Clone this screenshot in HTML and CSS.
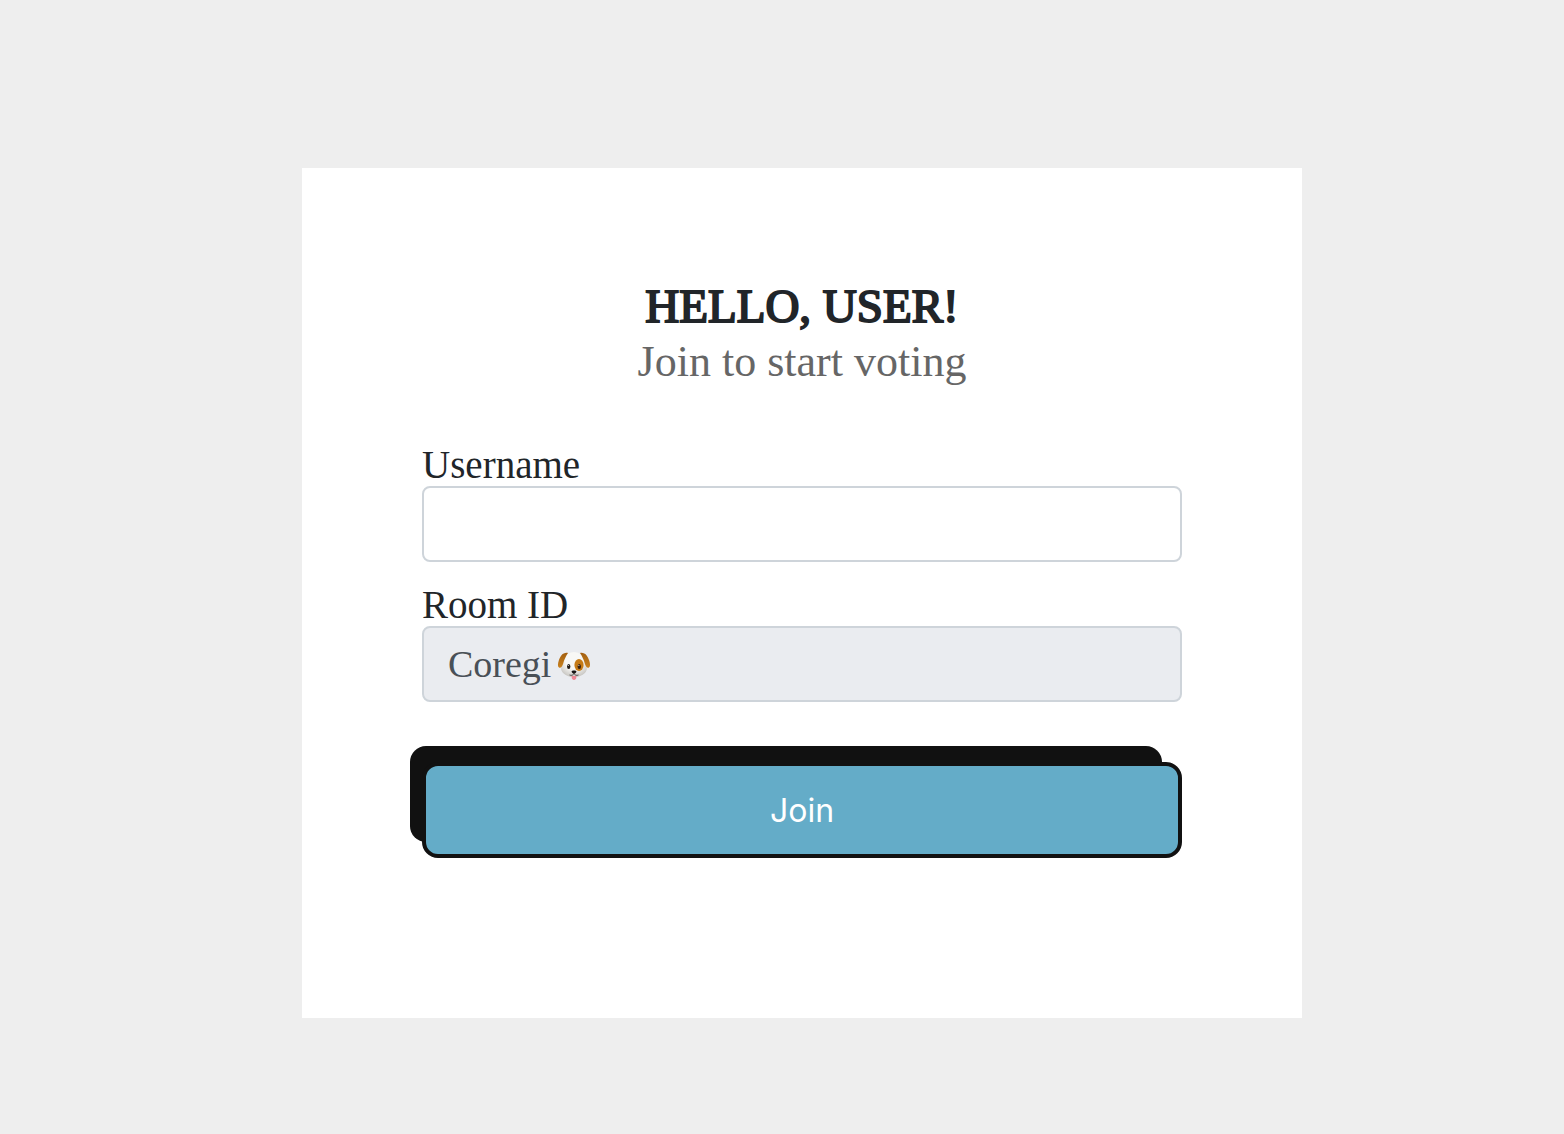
FILE: index.html
```html
<!DOCTYPE html>
<html lang="en">
<head>
  <meta charset="utf-8">
  <meta name="viewport" content="width=device-width, initial-scale=1">
  <title>Join a room</title>
  <link rel="stylesheet" href="styles.css">
</head>
<body>
  <main class="card">
    <header class="intro">
      <h1 class="title">HELLO, USER!</h1>
      <p class="subtitle">Join to start voting</p>
    </header>
    <form class="form">
      <div class="field">
        <label class="label" for="username">Username</label>
        <input class="input" id="username" type="text">
      </div>
      <div class="field">
        <label class="label" for="room">Room ID</label>
        <div class="control">
          <input class="input" id="room" type="text" value="Coregi" disabled>
          <svg class="dog" viewBox="0 0 34 30" role="img" aria-label="Dog face">
            <defs>
              <radialGradient id="fur" cx="50%" cy="35%" r="65%">
                <stop offset="0.5" stop-color="#f8f8f6"/>
                <stop offset="1" stop-color="#c9c7c3"/>
              </radialGradient>
              <linearGradient id="ear" x1="0" y1="0" x2="0" y2="1">
                <stop offset="0" stop-color="#a35f10"/>
                <stop offset="1" stop-color="#c9821f"/>
              </linearGradient>
            </defs>
            <path d="M17 2C10 2 6 6 5 13c-.8 4-1.500 6 0 8.500C7 25 12 27 17 27s10-2 12-5.500c1.500-2.500.8-4.500 0-8.500C28 6 24 2 17 2z" fill="url(#fur)"/>
            <path d="M11 3C6 2 3.500 6 1.800 10.500.8 13.500.5 16.500 2 17.500c1.700 1 3.500-1.300 4.200-4C7.200 9.500 9 6 11 3z" fill="url(#ear)"/>
            <path d="M23 3c5-1 7.500 3 9.200 7.500 1 3 1.300 6-.2 7-1.700 1-3.500-1.300-4.200-4C26.800 9.500 25 6 23 3z" fill="url(#ear)"/>
            <ellipse cx="22" cy="15" rx="4.600" ry="6" fill="#c57a16"/>
            <ellipse cx="11.700" cy="16.500" rx="1.700" ry="2.500" fill="#211c1a"/>
            <ellipse cx="22.300" cy="16.500" rx="1.700" ry="2.500" fill="#3b220f"/>
            <circle cx="11.300" cy="15.500" r=".5" fill="#fff"/>
            <circle cx="21.900" cy="15.500" r=".5" fill="#fff"/>
            <path d="M14.700 26h4.600v1.500c0 3.200-4.600 3.200-4.600 0z" fill="#ee8795"/>
            <path d="M12.500 25c2 .8 3.700.2 4.500-1.500.8 1.700 2.500 2.300 4.500 1.500" fill="none" stroke="#5a5350"/>
            <path d="M14.600 21.300c0-1.200 4.800-1.200 4.800 0 0 1.200-1.400 2.400-2.400 2.400s-2.400-1.200-2.400-2.400z" fill="#171514"/>
          </svg>
        </div>
      </div>
      <button class="join" type="submit">Join</button>
    </form>
  </main>
</body>
</html>
```
FILE: styles.css
```css
* {
  box-sizing: border-box;
}

body {
  margin: 0;
  min-height: 100vh;
  padding: 168px 40px 116px 80px;
  background: #eeeeee;
  color: #212529;
  font-family: "Liberation Serif", serif;
}

.card {
  max-width: 1000px;
  margin: 0 auto;
  padding: 110px 120px 160px;
  background: #ffffff;
}

.intro {
  margin-bottom: 54px;
  text-align: center;
}

.title,
.subtitle {
  margin: 0;
  line-height: 56px;
}

.title {
  font-size: 47px;
  font-weight: 400;
  -webkit-text-stroke: 2px #212529;
}

.subtitle {
  color: #666666;
  font-size: 44px;
}

.form {
  isolation: isolate;
}

.field {
  margin-bottom: 22px;
}

.label {
  display: block;
  font-size: 39px;
  line-height: 42px;
}

.control {
  position: relative;
}

.input {
  display: block;
  width: 100%;
  height: 76px;
  padding: 0 24px;
  border: 2px solid #ced4da;
  border-radius: 8px;
  background: #ffffff;
  color: #495057;
  font-family: inherit;
  font-size: 38px;
}

.input:disabled {
  background: #eaecf0;
}

/* Sits over the field, right after the room name */
.dog {
  position: absolute;
  top: 24px;
  left: 135px;
  width: 34px;
  height: 30px;
}

.join {
  position: relative;
  display: block;
  width: 100%;
  height: 96px;
  margin-top: 60px;
  border: 4px solid #111111;
  border-radius: 16px;
  background: #64acc8;
  color: #ffffff;
  font-family: Inter, sans-serif;
  font-size: 32px;
}

/* Dark slab showing behind the button's top and left edges */
.join::before {
  content: "";
  position: absolute;
  z-index: -1;
  inset: -20px 16px 12px -16px;
  border-radius: 16px;
  background: #111111;
}
```
